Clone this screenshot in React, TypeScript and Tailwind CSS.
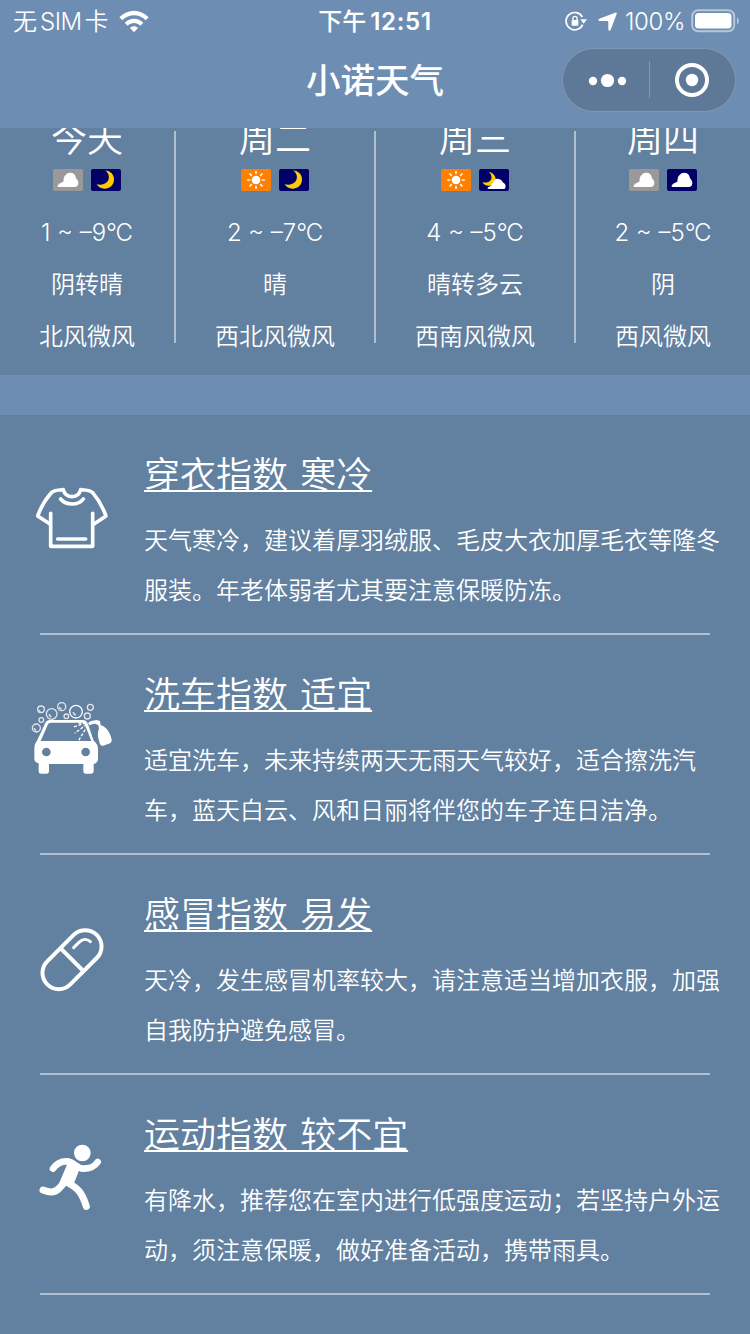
import React from 'react';

type Sky = 'cloud' | 'moon' | 'sun' | 'moonCloud' | 'nightCloud';

interface Day {
  name: string;
  icons: [Sky, Sky];
  temp: string;
  weather: string;
  wind: string;
}

const days: Day[] = [
  { name: '今天', icons: ['cloud', 'moon'], temp: '1 ~ –9', weather: '阴转晴', wind: '北风微风' },
  { name: '周二', icons: ['sun', 'moon'], temp: '2 ~ –7', weather: '晴', wind: '西北风微风' },
  { name: '周三', icons: ['sun', 'moonCloud'], temp: '4 ~ –5', weather: '晴转多云', wind: '西南风微风' },
  { name: '周四', icons: ['cloud', 'nightCloud'], temp: '2 ~ –5', weather: '阴', wind: '西风微风' },
];

const cloudPath =
  'M18 54C13 54 12 50 16 47C19 43 23 41 31 38C32 26 34 22 37 19C41 13 46 11 53 11C63 12 68 18 69 28C74 33 76 37 76 43C75 51 72 54 65 54Z';

const SkyIcon: React.FC<{ sky: Sky }> = ({ sky }) => {
  const bg = sky === 'cloud' ? '#999999' : sky === 'sun' ? '#ff7f00' : '#000066';

  return (
    <svg width="30" height="22" viewBox="0 0 90 66">
      <rect width="90" height="66" rx="6" fill={bg} />
      {(sky === 'cloud' || sky === 'nightCloud') && <path d={cloudPath} fill="#fff" />}
      {sky === 'moon' && (
        <path d="M42 4C59 6 69 17 69 31C69 47 58 58 43 59C32 60 22 55 17 46C29 49 43 47 50 37C57 27 54 12 42 4Z" fill="#ffcc00" />
      )}
      {sky === 'moonCloud' && (
        <>
          <path d="M30 8C43 12 51 21 50 32C49 43 41 50 29 50C20 50 14 47 10 40C21 42 31 40 36 32C40 25 37 16 30 8Z" fill="#ffcc00" />
          <path d="M30 60C25 60 24 56 29 54L36 50C38 46 38 43 43 40C44 32 51 28 59 30C65 31 69 34 71 40C78 43 82 50 79 56C78 59 76 60 73 60Z" fill="#fff" />
        </>
      )}
      {sky === 'sun' && (
        <g stroke="#fff" strokeWidth="5" strokeLinecap="round">
          <circle cx="45" cy="33" r="13" fill="#fff" stroke="none" />
          <path d="M45 8V13M45 53V58M20 33H26M64 33H70M27 15L31 19M63 15L59 19M27 51L31 47M63 51L59 47" />
        </g>
      )}
    </svg>
  );
};

const ShirtIcon = () => (
  <svg width="110" height="100" viewBox="0 0 330 300" fill="none" stroke="#fff" strokeWidth="11" strokeLinecap="round" strokeLinejoin="round">
    <path d="M92 130V229H218V130" />
    <path d="M90 162L53 138C62 113 76 88 94 68C102 60 113 60 130 59C134 73 143 80 156 80C169 80 178 73 182 59C199 60 210 60 218 68C235 88 249 113 258 138L222 162" />
    <path d="M122 87C138 107 175 107 190 87M113 207H197" />
  </svg>
);

const CarIcon = () => (
  <svg width="110" height="100" viewBox="0 0 330 300" fill="none">
    <g stroke="#fff" strokeOpacity="0.8" strokeWidth="4">
      <circle cx="63" cy="58" r="10" />
      <circle cx="95" cy="72" r="16" />
      <circle cx="125" cy="50" r="12" />
      <circle cx="168" cy="65" r="19" strokeOpacity="1" />
      <circle cx="202" cy="78" r="9" />
      <circle cx="211" cy="52" r="9" />
      <circle cx="139" cy="79" r="7" />
      <circle cx="64" cy="90" r="7" />
      <circle cx="49" cy="114" r="12" />
      <path d="M88 72C88 77 91 80 95 80M160 66C160 71 163 74 168 75M119 51C119 55 122 57 125 57M43 114C43 118 46 121 49 121M57 59C57 62 59 64 62 64" />
    </g>
    <path
      fillRule="evenodd"
      d="M51 152L73 105C77 94 82 90 92 90H186C196 90 201 94 205 105L221 152C232 161 234 168 234 178V207C234 215 229 220 221 222V244C221 249 218 251 214 251H197C193 251 190 249 190 244V222H87V244C87 249 84 251 80 251H63C58 251 56 249 56 244V220C48 218 43 214 43 206V177C43 166 45 160 51 152ZM62 153H214L196 107C194 100 191 98 186 98H94C87 98 85 100 82 107ZM79 173A13 13 0 1 0 79 199A13 13 0 1 0 79 173ZM197 173A13 13 0 1 0 197 199A13 13 0 1 0 197 173Z"
      fill="#fff"
    />
    <path d="M204 99L213 93L230 90L240 93L242 105L250 109C262 116 272 132 275 149C276 156 271 160 264 162L250 167C244 169 241 166 239 160C234 145 231 130 237 115L235 106L226 101L216 103L209 106Z" fill="#fff" />
    <path d="M197 99L160 111M200 103L164 130M203 107L175 153M198 96L176 100" stroke="#fff" strokeWidth="4" strokeDasharray="9 5" />
  </svg>
);

const PillIcon = () => (
  <svg width="110" height="100" viewBox="0 0 330 300" fill="none" stroke="#fff" strokeWidth="12" strokeLinecap="round">
    <rect x="51" y="100" width="210" height="98" rx="49" transform="rotate(-45 156 149)" />
    <path d="M122 115L190 183" />
    <path d="M161 113L177 97C187 87 200 85 211 95" strokeWidth="9" />
  </svg>
);

const RunIcon = () => (
  <svg width="110" height="100" viewBox="0 0 330 300" fill="none" stroke="#fff" strokeLinecap="round" strokeLinejoin="round">
    <circle cx="187" cy="69" r="25" fill="#fff" stroke="none" />
    <path d="M99 116C112 98 127 92 147 95C164 99 171 115 190 116C211 116 223 111 233 96" strokeWidth="20" />
    <path d="M69 180C94 190 107 187 120 172L138 152" strokeWidth="21" />
    <path d="M145 159C174 175 186 188 199 229" strokeWidth="21" />
    <path d="M145 100L178 114L158 164L132 164L120 158Z" fill="#fff" strokeWidth="4" />
  </svg>
);

const indexes = [
  {
    title: '穿衣指数 寒冷',
    text: '天气寒冷，建议着厚羽绒服、毛皮大衣加厚毛衣等隆冬服装。年老体弱者尤其要注意保暖防冻。',
    Icon: ShirtIcon,
  },
  {
    title: '洗车指数 适宜',
    text: '适宜洗车，未来持续两天无雨天气较好，适合擦洗汽车，蓝天白云、风和日丽将伴您的车子连日洁净。',
    Icon: CarIcon,
  },
  {
    title: '感冒指数 易发',
    text: '天冷，发生感冒机率较大，请注意适当增加衣服，加强自我防护避免感冒。',
    Icon: PillIcon,
  },
  {
    title: '运动指数 较不宜',
    text: '有降水，推荐您在室内进行低强度运动；若坚持户外运动，须注意保暖，做好准备活动，携带雨具。',
    Icon: RunIcon,
  },
];

const StatusBar = () => (
  <div className="grid h-10 grid-cols-[250px_250px_250px] items-center text-[24px] leading-10">
    <div className="flex items-center pl-[13px]">
      <span className="whitespace-pre pt-[2px] font-[350]">
        无<span className="mx-[3px] tracking-[-0.5px]">SIM</span>卡
      </span>
      <svg className="ml-[10px]" width="30" height="23" viewBox="0 0 90 69" fill="#fff">
        <path d="M1 22C26 -4 64 -4 89 22L80 31C60 11 30 11 10 31Z" />
        <path d="M17 38C33 22 57 22 73 38L64 47C53 36 37 36 26 47Z" />
        <path d="M33 54C40 47 50 47 57 54L45 67Z" />
      </svg>
    </div>
    <div className="pt-[2px] text-center font-medium">
      下午<span className="ml-1 font-semibold tracking-[0.7px]">12:51</span>
    </div>
    <div className="flex items-center pl-[65px]">
      <svg width="22" height="20" viewBox="0 0 66 60" fill="none">
        <path d="M53 41A26 26 0 1 1 52 18" stroke="#fff" strokeWidth="5" />
        <path d="M46 25H66L56 38Z" fill="#fff" />
        <rect x="20" y="27" width="20" height="17" rx="2" fill="#fff" />
        <path d="M24 28V22C24 14 36 14 36 22V28" stroke="#fff" strokeWidth="4" />
      </svg>
      <svg className="ml-[11px]" width="19" height="19" viewBox="0 0 57 57" fill="#fff">
        <path d="M51 2C55 0 57 2 56 6L38 53C36 57 31 57 31 52V30C31 28 30 27 28 27H5C0 27 0 22 4 20Z" />
      </svg>
      <span className="ml-2 w-[64px] pt-[2px] font-[350] tracking-[-0.4px]">100%</span>
      <svg className="ml-[2px]" width="50" height="24" viewBox="0 0 50 24" fill="none">
        <rect x="1.2" y="1.2" width="42" height="21" rx="6" stroke="#fff" strokeOpacity="0.5" strokeWidth="2" />
        <rect x="4" y="4" width="36.5" height="15.5" rx="3.5" fill="#fff" />
        <path d="M46 8.5C48.5 10 48.5 14 46 15.5Z" fill="#fff" fillOpacity="0.5" />
      </svg>
    </div>
  </div>
);

const TitleBar = () => (
  <div className="grid h-[88px] grid-cols-[250px_250px_250px]">
    <h1 className="col-start-2 pt-px text-center text-[34.5px] font-medium leading-20">小诺天气</h1>
    <div className="ml-[62px] mt-2 flex h-16 w-[174px] items-center rounded-full border border-[#8296af] bg-[#5e7897]">
      <svg width="172" height="62" viewBox="0 0 172 62" fill="#fff">
        <circle cx="30" cy="32" r="4.2" />
        <circle cx="44.5" cy="31.5" r="6.6" />
        <circle cx="59" cy="32" r="4.2" />
        <path d="M86.5 12V49" stroke="#8296af" strokeWidth="1" />
        <circle cx="129" cy="31" r="15" fill="none" stroke="#fff" strokeWidth="4" />
        <circle cx="129" cy="31" r="6.2" />
      </svg>
    </div>
  </div>
);

const Forecast = () => (
  <section className="h-[247px] overflow-hidden bg-[#62809f] pt-[3px]">
    <div className="grid grid-cols-[176px_200px_200px_174px] grid-rows-[212px]">
      {days.map((day) => (
        <div key={day.name} className="flex flex-col items-center border-r-2 border-[#b0bfcf] font-[350] last:border-r-0">
          <div className="-mt-[18px] h-[56px] shrink-0 text-[36px] leading-[52px]">{day.name}</div>
          <div className="flex h-[38px] shrink-0 gap-2">
            {day.icons.map((sky, i) => (
              <SkyIcon key={i} sky={sky} />
            ))}
          </div>
          <div className="shrink-0 whitespace-nowrap text-center text-[24px] leading-[52px]">
            <p className="font-light">
              {day.temp}
              <span className="tracking-[-1.5px]">°</span>C
            </p>
            <p>{day.weather}</p>
            <p>{day.wind}</p>
          </div>
        </div>
      ))}
    </div>
  </section>
);

export default function App() {
  return (
    <div className="flex h-[1334px] w-[750px] flex-col overflow-hidden bg-[#6d8eb2] font-['Inter','Noto_Sans_CJK_SC',sans-serif] text-white" lang="zh-CN">
      <StatusBar />
      <TitleBar />
      <Forecast />
      <section className="mt-10 flex-1 bg-[#62809f]">
        {indexes.map(({ title, text, Icon }) => (
          <article key={title} className="h-[220px]">
            <div className="flex h-[218px] pl-5">
              <div className="w-[124px] shrink-0 pt-[55px]">
                <Icon />
              </div>
              <div className="w-[580px] pt-[34px] font-[350]">
                <h2 className="text-[36px] leading-[52px] underline decoration-2 underline-offset-[2px] [text-decoration-skip-ink:none] [word-spacing:2px]">{title}</h2>
                <p className="mt-[15px] text-[24px] leading-[50px]">{text}</p>
              </div>
            </div>
            <div className="mx-10 h-[2px] bg-[#b0bfcf]" />
          </article>
        ))}
      </section>
    </div>
  );
}
